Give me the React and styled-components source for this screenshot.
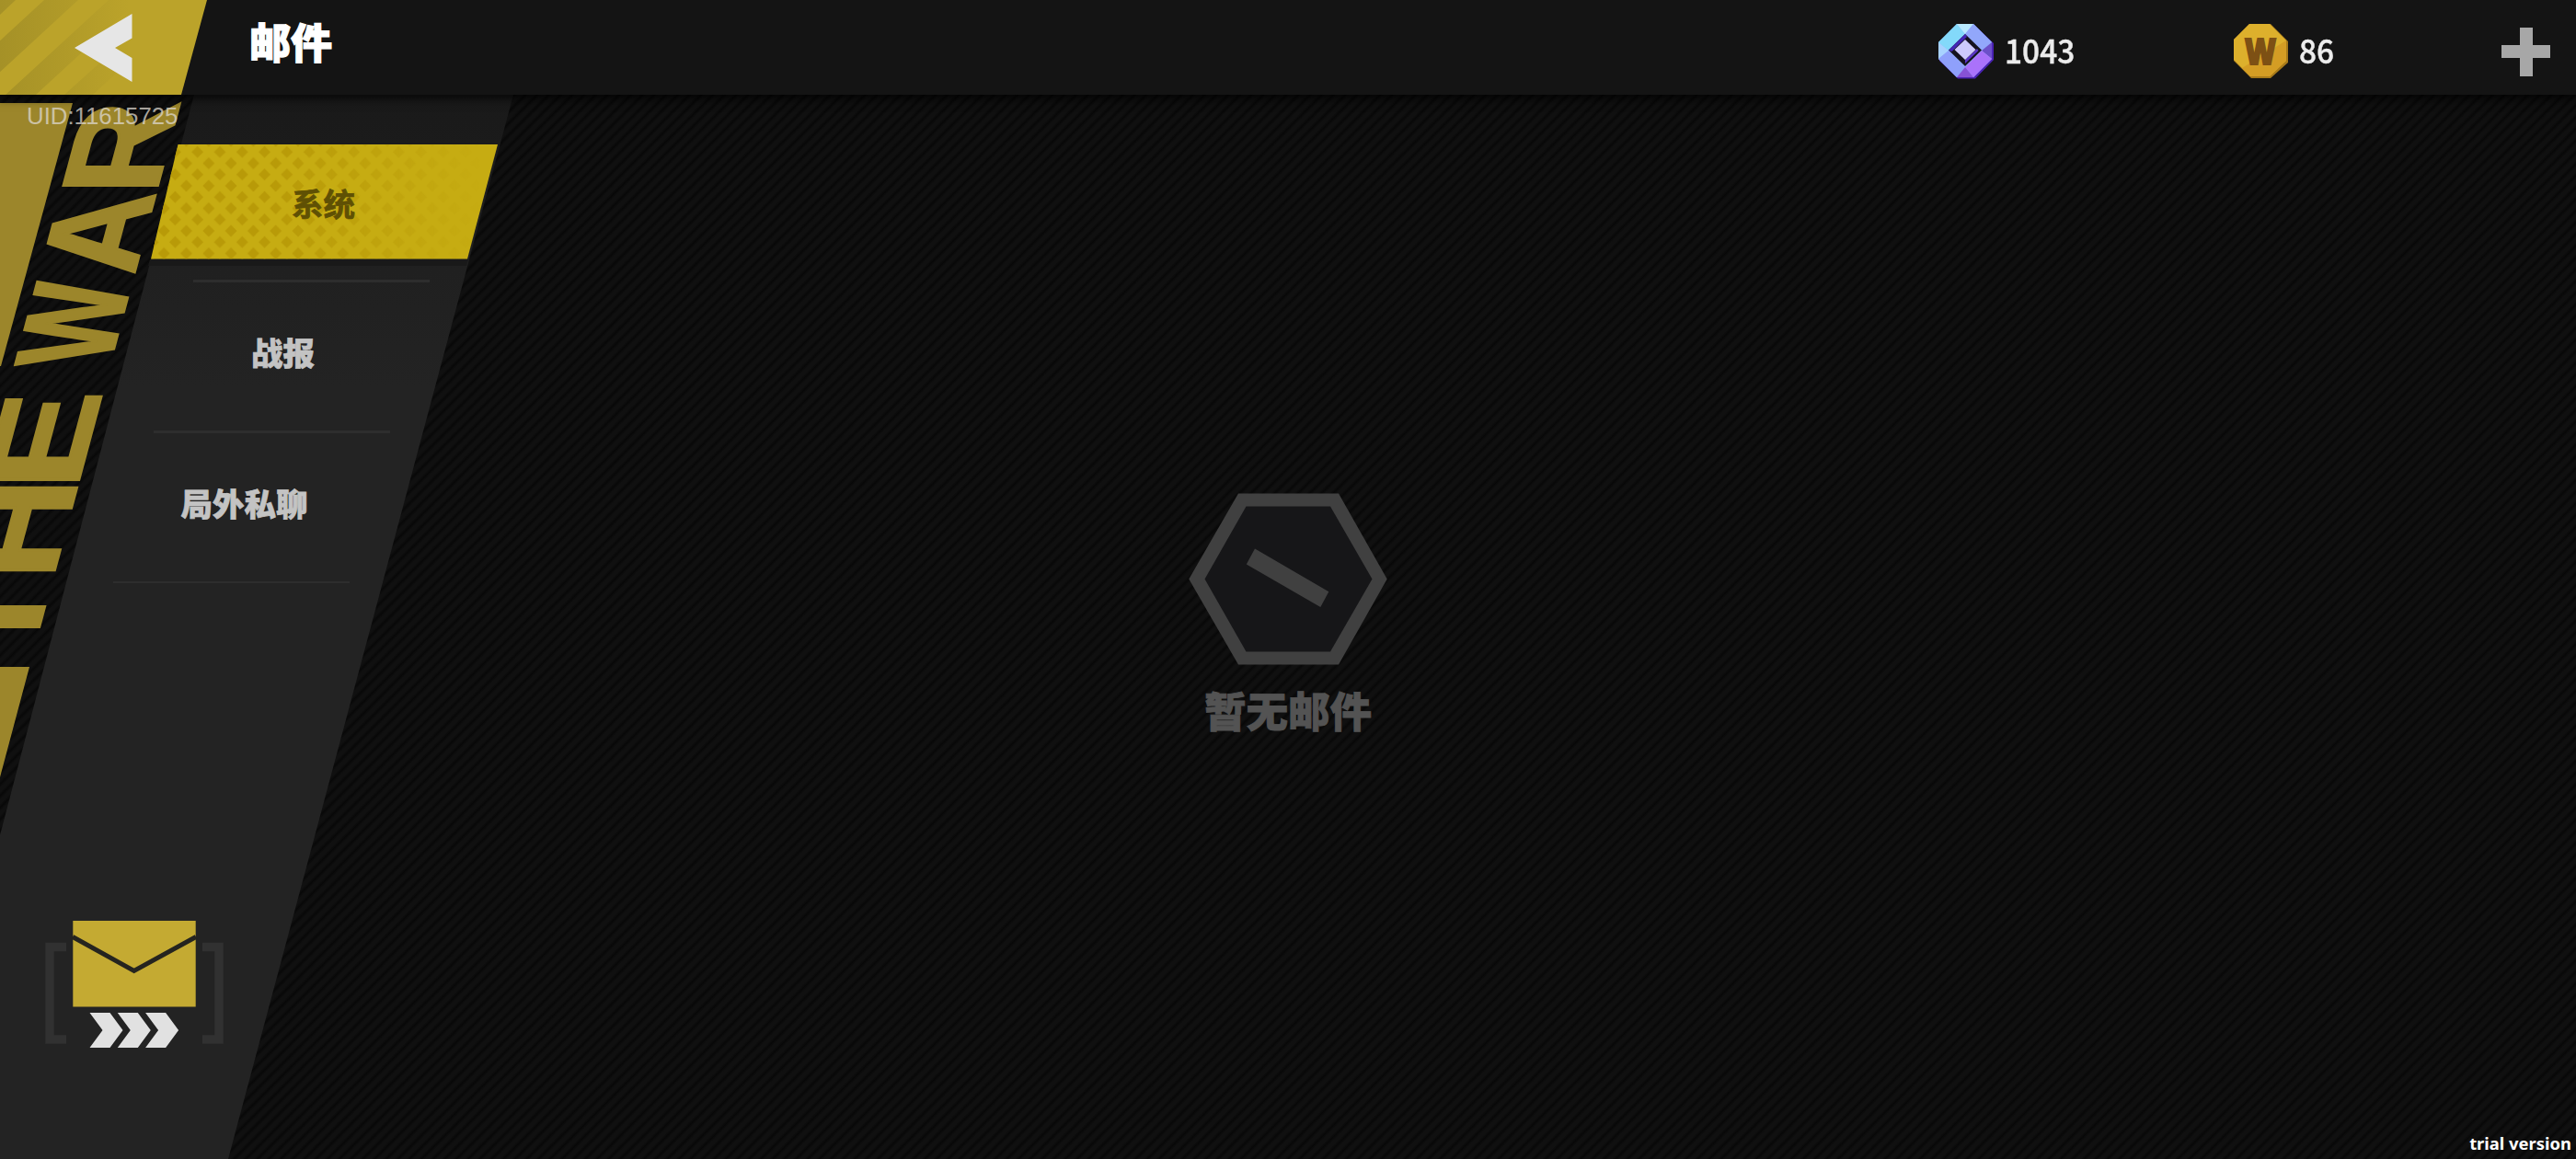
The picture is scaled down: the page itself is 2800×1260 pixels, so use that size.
import React, { useState } from 'react'
import styled, { createGlobalStyle } from 'styled-components'

const GlobalStyle = createGlobalStyle`
    body {
        margin: 0;
        background: #0b0b0b;
        overflow: hidden;
    }
`
const Page = styled.div`
    display: flex;
    flex-direction: column;
    width: 2800px;
    height: 1260px;
    position: relative;
    overflow: hidden;
    font-family: 'Noto Sans CJK SC', 'Noto Sans', sans-serif;
    background: repeating-linear-gradient(
        -45deg,
        #080808 0px,
        #101010 3px,
        #101010 6px,
        #080808 9px
    );
`
const Header = styled.header`
    display: flex;
    align-items: center;
    height: 103px;
    flex: none;
    background: #141414;
    box-shadow: 0 2px 10px 2px rgba(0, 0, 0, .75);
    position: relative;
    z-index: 1;
`
const BackButton = styled.button`
    display: block;
    width: 225px;
    height: 103px;
    padding: 0;
    border: 0;
    background: none;
    > svg {
        display: block;
    }
`
const Title = styled.h1`
    margin: 0 auto 14px 46px;
    color: #fff;
    font-size: 45px;
    font-weight: 900;
    line-height: 60px;
    -webkit-text-stroke: 1.2px #fff;
`
const Currency = styled.div`
    display: flex;
    align-items: center;
    width: ${props => props.width}px;
    padding-top: 8px;
    > svg {
        flex: none;
    }
`
const Amount = styled.span`
    margin: 0 0 6px 11px;
    color: #ececec;
    font-size: 36px;
    font-weight: 500;
    line-height: 50px;
    -webkit-text-stroke: .4px #ececec;
    transform: scaleX(.93);
    transform-origin: left;
`
const AddButton = styled.button`
    width: 53px;
    height: 53px;
    margin: 9px 28px 0 0;
    padding: 0;
    border: 0;
    background:
        linear-gradient(#a7a7a7, #a7a7a7) center / 14px 100% no-repeat,
        linear-gradient(#a7a7a7, #a7a7a7) center / 100% 14px no-repeat;
`
const Body = styled.div`
    display: grid;
    grid-template-columns: 558px 1fr 558px;
    flex: 1;
`
const Sidebar = styled.aside`
    display: flex;
    flex-direction: column;
    justify-content: space-between;
    position: relative;
`
const Backdrop = styled.svg`
    position: absolute;
    top: 0;
    left: 0;
`
const Uid = styled.div`
    position: absolute;
    top: 9px;
    left: 29px;
    color: rgba(220, 214, 205, .76);
    font-family: 'Liberation Sans', Arial, sans-serif;
    font-size: 25.8px;
    line-height: 28px;
`
const Nav = styled.nav`
    display: flex;
    flex-direction: column;
    padding-top: 54px;
    position: relative;
`
const Tab = styled.button`
    display: flex;
    align-items: center;
    justify-content: center;
    box-sizing: border-box;
    width: 377px;
    height: ${props => props.height}px;
    margin: 0 0 0 ${props => props.indent}px;
    padding: 0 0 11px;
    border: 0;
    background: none;
    color: #c3c3c3;
    font-family: inherit;
    font-size: 34.5px;
    font-weight: 900;
    -webkit-text-stroke: .7px currentColor;
`
const ActiveTab = styled(Tab)`
    position: relative;
    padding: 0 2px 0 0;
    color: #5f5004;
    font-weight: 700;
    > svg {
        position: absolute;
        top: 0;
        left: 0;
    }
    > span {
        position: relative;
    }
`
const TabShade = styled.div`
    width: 346px;
    height: 7px;
    margin: 0 0 15px 162px;
    background: #191919;
    transform: skewX(-15deg);
`
const Divider = styled.div`
    width: 257px;
    height: ${props => props.thickness || 3}px;
    margin-left: ${props => props.indent}px;
    background: #2d2d2d;
`
const MailBadge = styled.div`
    margin: 0 0 120px 49px;
    position: relative;
    > svg {
        display: block;
    }
`
const Empty = styled.main`
    display: flex;
    flex-direction: column;
    align-items: center;
    padding-top: 433px;
`
const EmptyText = styled.p`
    margin: 16px 0 0;
    color: #535353;
    font-size: 45.5px;
    font-weight: 900;
    line-height: 64px;
    -webkit-text-stroke: .8px #535353;
`
const Watermark = styled.div`
    position: absolute;
    right: 5px;
    bottom: 4px;
    color: #fff;
    font-family: 'Noto Sans', sans-serif;
    font-size: 18.4px;
    font-weight: 700;
    line-height: 26px;
`

const tabs = [
    { name: '系统', indent: 164, height: 125 },
    { name: '战报', indent: 119, height: 161, line: 167 },
    { name: '局外私聊', indent: 77, height: 161, line: 123 },
]

// y is where each letter starts, the word runs upwards
const bannerLetters = [
    { char: 'T', y: 717, length: 93 },
    { char: 'H', y: 630, length: 110 },
    { char: 'E', y: 532, length: 107 },
    { char: 'W', y: 397, length: 91 },
    { char: 'A', y: 299, length: 90 },
    { char: 'R', y: 211, length: 101 },
]

function BackArt(){
    return (
        <svg width="225" height="103" viewBox="0 0 225 103">
            <defs>
                <linearGradient id="backFade" x1="0" y1="0" x2="200" y2="0" gradientUnits="userSpaceOnUse">
                    <stop offset="0" stopColor="#8f7f24" stopOpacity=".5" />
                    <stop offset=".7" stopColor="#8f7f24" stopOpacity="0" />
                </linearGradient>
                <clipPath id="backClip"><path d="M0 0H225L197 103H0Z" /></clipPath>
            </defs>
            <g clipPath="url(#backClip)">
                <rect width="225" height="103" fill="#bba32a" />
                <path
                    d="M0 0H17L0 16ZM48 0H85L-27 103H-64ZM118 0H151L39 103H6ZM184 0H213L101 103H70Z"
                    fill="url(#backFade)"
                />
                <path d="M81 52L143.500 15V41.500L125 52L143.500 63V89Z" fill="#e6e6e6" />
            </g>
        </svg>
    )
}

function SidebarArt(){
    return (
        <Backdrop width="558" height="1157" viewBox="0 103 558 1157">
            <defs>
                <linearGradient id="panelFade" x1="0" y1="103" x2="0" y2="420" gradientUnits="userSpaceOnUse">
                    <stop offset="0" stopColor="#191919" />
                    <stop offset=".6" stopColor="#202020" />
                    <stop offset="1" stopColor="#232323" />
                </linearGradient>
            </defs>
            <g fill="#9c862b">
                <path d="M0 112H79L1 398H0Z" />
                <path d="M0 725H32L0 845Z" />
                {bannerLetters.map(letter => (
                    <text
                        key={letter.char}
                        transform={`matrix(.268 -1 1 0 ${177 - (letter.y - 181) * .268} ${letter.y})`}
                        textLength={letter.length}
                        lengthAdjust="spacingAndGlyphs"
                        fontFamily="'Liberation Sans', Arial, sans-serif"
                        fontWeight="700"
                        fontSize="149"
                        stroke="#9c862b"
                        strokeWidth="3"
                    >
                        {letter.char}
                    </text>
                ))}
            </g>
            <path d="M211 103H558L248 1260H0V908Z" fill="url(#panelFade)" />
        </Backdrop>
    )
}

function TabArt(){
    return (
        <svg width="377" height="125" viewBox="0 0 377 125">
            <defs>
                <pattern id="diamonds" x="38.500" y="-4" width="24.300" height="24.500" patternUnits="userSpaceOnUse">
                    <path d="M12.150 5.700L18.600 12.200L12.150 18.700L5.700 12.200Z" fill="#b89a08" />
                    <path d="M0 -6.500L6.500 0L0 6.500L-6.500 0ZM24.300 -6.500L30.800 0L24.300 6.500L17.800 0ZM0 18L6.500 24.500L0 31L-6.500 24.500ZM24.300 18L30.800 24.500L24.300 31L17.800 24.500Z" fill="#b89a08" />
                </pattern>
                <linearGradient id="tabFade">
                    <stop offset=".35" stopColor="#fff" />
                    <stop offset=".95" stopColor="#fff" stopOpacity="0" />
                </linearGradient>
                <mask id="tabMask"><rect width="377" height="125" fill="url(#tabFade)" /></mask>
            </defs>
            <path d="M29.500 0H377L344 124.500H0Z" fill="#c6ac12" />
            <path d="M29.500 0H377L344 124.500H0Z" fill="url(#diamonds)" mask="url(#tabMask)" />
        </svg>
    )
}

function GemIcon(){
    return (
        <svg width="61" height="60" viewBox="0 0 61 60">
            <path d="M21 1H39L60 21V39L40 59.500H21L1 40Z" fill="#4a22b4" />
            <path d="M20 0H38L58 20V38L38 58H20L0 38V20Z" fill="#8fb4fb" />
            <path d="M20 0L29 11L11 29L0 20Z" fill="#83d9fa" />
            <path d="M20 0H38L29 11Z" fill="#b9e9ff" />
            <path d="M38 0L58 20L47 29L29 11Z" fill="#92a7fb" />
            <path d="M0 20L11 29L0 38Z" fill="#a8d2ff" />
            <path d="M0 38L11 29L29 47L20 58Z" fill="#8fa0fb" />
            <path d="M58 20V38L47 29Z" fill="#6d4fc9" />
            <path d="M58 38L47 29L29 47L38 58Z" fill="#aa72fa" />
            <path d="M20 58H38L29 47Z" fill="#8752d6" />
            <path d="M29 11L47 28.500L29 46L11 28.500Z" fill="#15121f" />
            <path d="M29 11L31 14L14.500 30L11 28.500Z" fill="#4326b5" />
            <path d="M42 27L43.500 29L29 43V39Z" fill="#5a35c8" />
            <path d="M29 17L40.500 28L29 39L17.500 28Z" fill="#cdc9fc" />
        </svg>
    )
}

function CoinIcon(){
    return (
        <svg width="60" height="60" viewBox="0 0 60 60">
            <path d="M17 0H40L59 19V42L40 59H19L0 40V17Z" fill="#a87a19" />
            <path d="M17 0H39L57 18V40L39 57H18L0 39V17Z" fill="#ddb02c" />
            <path d="M57 18V40L39 57H18L9 48Z" fill="#d49d24" />
            <text
                x="12"
                y="44"
                textLength="34"
                lengthAdjust="spacingAndGlyphs"
                fontFamily="'Noto Sans', sans-serif"
                fontWeight="900"
                fontSize="38"
                fill="#7d5014"
                stroke="#7d5014"
                strokeWidth="2"
            >
                W
            </text>
        </svg>
    )
}

function MailIcon(){
    return (
        <svg width="194" height="139" viewBox="49 1001 194 139">
            <path d="M72 1029.500H54V1130H72M220 1029.500H238V1130H220" fill="none" stroke="#313131" strokeWidth="9.500" />
            <rect x="79.300" y="1001" width="133.400" height="93.500" fill="#c4aa32" />
            <path d="M79 1018.500L145.700 1055.500L213 1018.500" fill="none" stroke="#25241f" strokeWidth="5" />
            {[0, 30.300, 60.600].map(x => (
                <path
                    key={x}
                    transform={`translate(${x} 0)`}
                    d="M97.500 1101H119.500L133.500 1120L119.500 1139H97.500L111.500 1120Z"
                    fill="#e1e1e1"
                />
            ))}
        </svg>
    )
}

function EmptyIcon(){
    return (
        <svg width="216" height="187" viewBox="1292 536.500 216 187">
            <path d="M1346 537H1455L1507.700 630L1455 723H1346L1292.300 630Z" fill="#404040" />
            <path d="M1354.500 551H1446L1491.500 630L1446 709H1354.500L1309.500 630Z" fill="#161618" />
            <path d="M1364 597L1444.300 643.700L1435.300 660.500L1354.800 614Z" fill="#404040" />
        </svg>
    )
}

function App(){
    const [curTab, setCurTab] = useState(0)

    const tab_lines = tabs.map((tab, index) => {
        const select = () => setCurTab(index)
        return (
            <React.Fragment key={tab.name}>
                {index === curTab
                    ? <ActiveTab indent={tab.indent} height={tab.height} onClick={select}>
                        <TabArt />
                        <span>{tab.name}</span>
                    </ActiveTab>
                    : <Tab indent={tab.indent} height={tab.height} onClick={select}>{tab.name}</Tab>
                }
                {index === 0 && <TabShade />}
                <Divider indent={tab.line || 210} thickness={index === 2 ? 2 : 3} />
            </React.Fragment>
        )
    })

    return (
        <Page>
            <GlobalStyle />
            <Header>
                <BackButton aria-label="back"><BackArt /></BackButton>
                <Title>邮件</Title>
                <Currency width={321}>
                    <GemIcon />
                    <Amount>1043</Amount>
                </Currency>
                <Currency width={291}>
                    <CoinIcon />
                    <Amount>86</Amount>
                </Currency>
                <AddButton aria-label="add" />
            </Header>
            <Body>
                <Sidebar>
                    <SidebarArt />
                    <Uid>UID:11615725</Uid>
                    <Nav>{tab_lines}</Nav>
                    <MailBadge><MailIcon /></MailBadge>
                </Sidebar>
                <Empty>
                    <EmptyIcon />
                    <EmptyText>暂无邮件</EmptyText>
                </Empty>
            </Body>
            <Watermark>trial version</Watermark>
        </Page>
    )
}

export default App
